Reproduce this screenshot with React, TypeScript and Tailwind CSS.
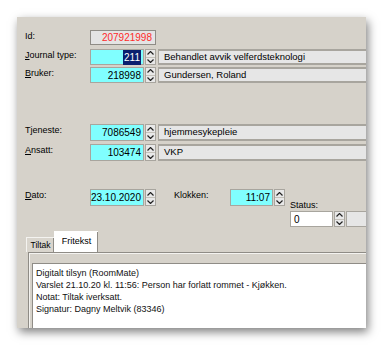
import React from "react";

const font = { fontFamily: '"Liberation Sans", Arial, sans-serif' };

function Spin({ h = 16 }: { h?: number }) {
  return (
    <div
      className="ml-[1px] flex w-[11px] shrink-0 flex-col border border-[#a8a59e] bg-[#e8e8e8]"
      style={{ height: h }}
    >
      <div className="flex flex-1 items-center justify-center border-b border-[#c4c1ba]">
        <svg width="7" height="4" viewBox="0 0 7 4">
          <path d="M0.5 3.5 L3.5 0.5 L6.5 3.5" fill="none" stroke="#222" strokeWidth="1.2" />
        </svg>
      </div>
      <div className="flex flex-1 items-center justify-center">
        <svg width="7" height="4" viewBox="0 0 7 4">
          <path d="M0.5 0.5 L3.5 3.5 L6.5 0.5" fill="none" stroke="#222" strokeWidth="1.2" />
        </svg>
      </div>
    </div>
  );
}

function Label({ children }: { children: React.ReactNode }) {
  return <div className="w-[73px] shrink-0 pl-[8px] text-[9px] leading-[12px] text-black">{children}</div>;
}

function CodeField({ value, h = 16, w = "w-[54px]" }: { value: React.ReactNode; h?: number; w?: string }) {
  return (
    <div
      className={`${w} flex shrink-0 items-center justify-end border border-[#a8a59e] bg-[#80ffff] pr-[2px] text-[10px] text-black`}
      style={{ height: h }}
    >
      {value}
    </div>
  );
}

function Desc({ text, h = 16 }: { text: string; h?: number }) {
  return (
    <div
      className="ml-[2px] flex min-w-[220px] flex-1 items-center border-y-2 border-l border-[#a8a59e] bg-[#e6e6e6] pl-[5px] text-[9.5px] text-black whitespace-nowrap"
      style={{ height: h }}
    >
      {text}
    </div>
  );
}

export default function App() {
  return (
    <div className="h-[346px] w-[383px] overflow-hidden bg-white" style={font}>
      <div className="ml-[17px] mt-[17px] flex h-[311px] w-[349px] flex-col overflow-hidden bg-[#d6d2ca] shadow-[2px_4px_9px_rgba(0,0,0,0.5)]">
        {/* Id */}
        <div className="mt-[13px] flex h-[15px] items-start">
          <Label>Id:</Label>
          <div className="flex h-[15px] w-[66px] items-center justify-end border border-[#8f8c86] bg-[#e4e4e4] pr-[3px] text-[10px] text-[#ff2a2a]">
            207921998
          </div>
        </div>

        {/* Journal type */}
        <div className="mt-[4px] flex items-start">
          <Label>
            <span className="underline">J</span>ournal type:
          </Label>
          <CodeField value={<span className="bg-[#0a1f6e] px-[1px] text-white">211</span>} />
          <Spin />
          <Desc text="Behandlet avvik velferdsteknologi" />
        </div>

        {/* Bruker */}
        <div className="mt-[2px] flex items-start">
          <Label>
            <span className="underline">B</span>ruker:
          </Label>
          <CodeField value="218998" />
          <Spin />
          <Desc text="Gundersen, Roland" />
        </div>

        {/* Tjeneste */}
        <div className="mt-[41px] flex items-start">
          <Label>Tjeneste:</Label>
          <CodeField value="7086549" h={17} />
          <Spin h={17} />
          <Desc text="hjemmesykepleie" h={17} />
        </div>

        {/* Ansatt */}
        <div className="mt-[3px] flex items-start">
          <Label>
            <span className="underline">A</span>nsatt:
          </Label>
          <CodeField value="103474" h={17} />
          <Spin h={17} />
          <Desc text="VKP" h={17} />
        </div>

        {/* Dato / Klokken / Status */}
        <div className="mt-[28px] flex items-start">
          <Label>
            <span className="underline">D</span>ato:
          </Label>
          <CodeField value="23.10.2020" h={17} />
          <Spin h={17} />
          <div className="ml-[18px] w-[56px] shrink-0 text-[9px] leading-[12px] text-black">Klokken:</div>
          <CodeField value="11:07" h={17} w="w-[43px]" />
          <Spin h={17} />
          <div className="ml-[5px] mt-[10px] flex flex-col">
            <div className="text-[9px] leading-[12px] text-black">Status:</div>
            <div className="flex items-start">
              <div className="flex h-[16px] w-[43px] items-center border border-[#a8a59e] bg-white pl-[3px] text-[10px] text-black">
                0
              </div>
              <Spin />
              <div className="ml-[1px] h-[16px] w-[40px] border border-[#a8a59e] bg-[#e6e6e6]" />
            </div>
          </div>
        </div>

        {/* Tabs */}
        <div className="mt-[4px] flex h-[21px] items-end pl-[9px]">
          <div className="flex h-[15px] w-[28px] items-center justify-center border-l border-t border-[#f4f3f0] bg-[#d9d5cd] text-[8.5px] text-black shadow-[inset_-1px_0_0_#8f8c86]">
            Tiltak
          </div>
          <div className="flex h-[21px] w-[44px] items-start justify-center border-l border-t border-white bg-white pt-[3px] text-[9px] text-black shadow-[inset_-1px_0_0_#8f8c86]">
            Fritekst
          </div>
        </div>

        <div className="ml-[11px] flex flex-1 flex-col border-l border-t border-[#8f8c86] pl-[3px] pt-[10px] shadow-[inset_1px_1px_0_#f4f3f0]">
          <div className="flex-1 border-l border-t border-[#8f8c86] bg-white pl-[3px] pt-[3px] text-[9px] leading-[12px] text-[#111]">
            <div>Digitalt tilsyn (RoomMate)</div>
            <div>Varslet 21.10.20 kl. 11:56: Person har forlatt rommet - Kjøkken.</div>
            <div>Notat: Tiltak iverksatt.</div>
            <div>Signatur: Dagny Meltvik (83346)</div>
          </div>
        </div>
      </div>
    </div>
  );
}
